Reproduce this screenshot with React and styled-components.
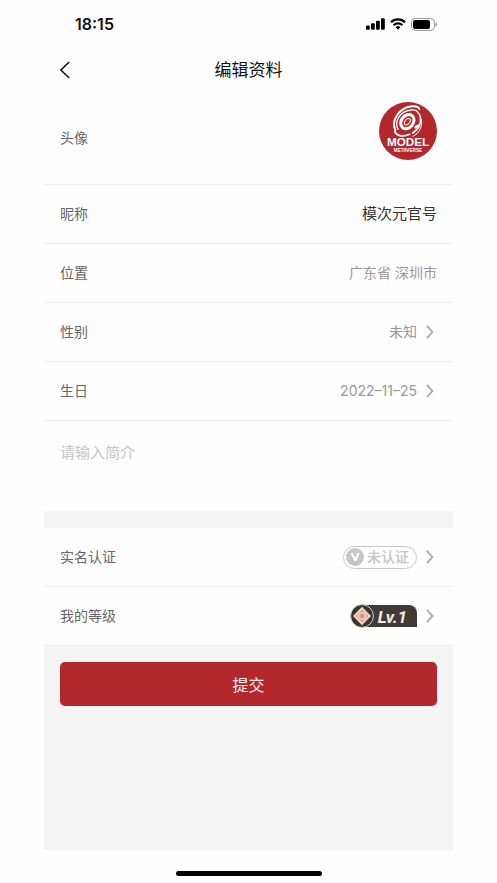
import React, { useState } from 'react';
import styled, { createGlobalStyle } from 'styled-components';

const GlobalStyle = createGlobalStyle`
  * {
    box-sizing: border-box;
  }
  body {
    margin: 0;
    background: #fefefe;
    font-family: Inter, "Noto Sans CJK SC", sans-serif;
  }
  button, input, select, textarea {
    font-family: inherit;
    margin: 0;
    padding: 0;
    border: none;
    background: transparent;
    appearance: none;
    &:focus {
      outline: none;
    }
  }
`;

const Screen = styled.div`
  min-height: 100vh;
  padding: 0 44px;
  display: flex;
  flex-direction: column;
`;

const StatusBar = styled.header`
  height: 48px;
  padding: 0 16px 0 31px;
  display: flex;
  align-items: center;
  justify-content: space-between;
`;

const Clock = styled.span`
  font-size: 16px;
  font-weight: 600;
  color: #111;
`;

const StatusIcons = styled.div`
  display: flex;
  align-items: center;
  gap: 5px;
`;

const NavBar = styled.nav`
  height: 44px;
  padding: 0 16px;
  display: grid;
  grid-template-columns: 1fr auto 1fr;
  align-items: center;
`;

const BackButton = styled.button`
  height: 18px;
  display: flex;
  justify-self: start;
  cursor: pointer;
`;

const Title = styled.h1`
  margin: 0;
  font-size: 17px;
  font-weight: 400;
  line-height: 24px;
  color: #111;
`;

const Form = styled.form`
  flex: 1;
  display: flex;
  flex-direction: column;
`;

const Row = styled.div`
  height: ${({ $tall }) => $tall ? 93 : 59}px;
  padding: 0 16px;
  display: flex;
  align-items: center;
  justify-content: space-between;
  border-bottom: 1px solid #efefef;
`;

const Label = styled.label`
  flex: none;
  font-size: 14px;
  line-height: 20px;
  color: #666;
`;

const Value = styled.div`
  display: flex;
  align-items: center;
  gap: 8px;
`;

const AvatarButton = styled.button`
  display: flex;
  padding-bottom: 14px;
  cursor: pointer;
`;

const TextInput = styled.input`
  flex: 1;
  min-width: 0;
  font-size: ${({ readOnly }) => readOnly ? 14 : 15}px;
  line-height: 20px;
  text-align: right;
  color: ${({ readOnly }) => readOnly ? '#999' : '#333'};
`;

const Select = styled.select`
  font-size: 14px;
  line-height: 20px;
  text-align-last: right;
  color: #999;
`;

const PickerButton = styled.button`
  display: flex;
  align-items: center;
  gap: 8px;
  font-size: 14px;
  line-height: 20px;
  color: #999;
  cursor: pointer;
`;

const Intro = styled.textarea`
  display: block;
  width: 100%;
  height: 90px;
  padding: 20px 16px;
  font-size: 15px;
  line-height: 24px;
  color: #333;
  resize: none;
  &::placeholder {
    color: #c5c5c9;
  }
`;

const Divider = styled.div`
  height: 17px;
  background: #f5f5f5;
`;

const VerifyTag = styled.span`
  height: 23px;
  padding: 0 7px 0 2px;
  display: flex;
  align-items: center;
  gap: 3px;
  border: 1px solid #c9c9c9;
  border-radius: 12px;
  font-weight: 500;
  color: #c4c4c4;
`;

const LevelTag = styled.span`
  height: 24px;
  display: flex;
  align-items: center;
`;

const LevelName = styled.span`
  height: 22px;
  margin-left: -12px;
  padding: 0 10px 0 16px;
  border-radius: 0 8px 0 0;
  background: #3f3b38;
  font-family: Roboto, sans-serif;
  font-size: 17px;
  font-style: italic;
  font-weight: 700;
  line-height: 24px;
  color: #f7ebe2;
`;

const Medal = styled.svg`
  position: relative;
`;

const Footer = styled.div`
  flex: 1;
  padding: 16px;
  background: #f5f5f5;
`;

const SubmitButton = styled.button`
  display: block;
  width: 100%;
  height: 44px;
  border-radius: 5px;
  background: #b3282d;
  font-size: 16px;
  color: #fbeeee;
  cursor: pointer;
`;

const HomeArea = styled.div`
  height: 33px;
  padding-bottom: 7px;
  display: flex;
  align-items: flex-end;
  justify-content: center;
`;

const HomeBar = styled.div`
  width: 146px;
  height: 5px;
  border-radius: 3px;
  background: #000;
`;

const Chevron = () => (
  <svg width="12" height="14" viewBox="0 0 12 14" fill="none" stroke="#aaa" strokeWidth="1.8">
    <path d="M2 0.8 L7.4 7 L2 13.2" />
  </svg>
);

const Signal = () => (
  <svg width="19" height="12" viewBox="0 0 19 12" fill="#000">
    <rect x="0" y="7.5" width="3.8" height="4.3" rx="1" />
    <rect x="5" y="5.2" width="3.8" height="6.6" rx="1" />
    <rect x="10" y="2.8" width="3.8" height="9" rx="1" />
    <rect x="15" y="0.2" width="3.8" height="11.6" rx="1" />
  </svg>
);

const Wifi = () => (
  <svg width="16" height="12" viewBox="0 0 16 12" fill="none" stroke="#000" strokeWidth="2.2">
    <path d="M0.9 4.3 A10.2 10.2 0 0 1 15.1 4.3" />
    <path d="M3.6 7.2 A6.3 6.3 0 0 1 12.4 7.2" />
    <path d="M5.7 9.2 A3.3 3.3 0 0 1 10.3 9.2 L8 11.7 Z" fill="#000" stroke="none" />
  </svg>
);

const Battery = () => (
  <svg width="26" height="13" viewBox="0 0 26 13">
    <rect x="0.5" y="0.5" width="23" height="12" rx="3.8" fill="none" stroke="#999" />
    <rect x="2" y="2" width="17" height="9" rx="2.2" fill="#000" />
    <path d="M24.5 4.5 Q26 5 26 6.5 Q26 8 24.5 8.5 Z" fill="#888" />
  </svg>
);

const Avatar = () => (
  <svg width="58" height="58" viewBox="0 0 174 174">
    <circle cx="87" cy="87" r="87" fill="#b3282d" />
    <g fill="none" stroke="#fff" strokeLinecap="round">
      <ellipse cx="85" cy="59" rx="18" ry="23" strokeWidth="9" transform="rotate(38 85 59)" />
      <ellipse cx="85" cy="59" rx="7" ry="11" strokeWidth="3" transform="rotate(38 85 59)" />
      <path d="M49 84 C36 56 60 16 100 13 C112 12 119 16 121 21" strokeWidth="6" />
      <path d="M57 82 C44 54 66 27 96 24 C109 23 116 28 118 34" strokeWidth="4" />
      <path d="M47 88 C55 105 76 104 92 97" strokeWidth="5" />
      <path d="M121 36 C130 58 122 80 101 93" strokeWidth="5" />
      <path d="M127 52 C131 74 121 94 102 103" strokeWidth="3" />
      <path d="M110 76 L118 71" strokeWidth="8" />
    </g>
    <g fill="#fff" fontFamily="Liberation Sans, sans-serif" fontWeight="700" textAnchor="middle">
      <text x="87" y="131" fontSize="35">MODEL</text>
      <text x="87" y="151" fontSize="14">METAVERSE</text>
    </g>
  </svg>
);

const VerifyMark = () => (
  <svg width="18" height="18" viewBox="0 0 18 18">
    <circle cx="9" cy="9" r="9" fill="#c6c6c6" />
    <path d="M4.6 5 H7 L9.2 10 L11.4 5 H13.8 L10.2 13 H8.2 Z" fill="#fff" />
  </svg>
);

const LevelMedal = () => (
  <Medal width="24" height="24" viewBox="0 0 24 24">
    <circle cx="12" cy="12" r="11.4" fill="#3a3532" stroke="#d8ccbc" strokeWidth="1" />
    <path d="M12 2.8 L21 12 L12 21.2 L3 12 Z" fill="#f4d8c8" />
    <path d="M12 5.4 L18.6 12 L12 18.6 L5.4 12 Z" fill="#dba78f" />
    <circle cx="12" cy="12" r="3.6" fill="#e0b09a" stroke="#f4dacb" strokeWidth="1" />
    <path d="M12 10.2 L13.8 12 L12 13.8 L10.2 12 Z" fill="#c28a75" />
  </Medal>
);

const App = () => {
  const [nickname, setNickname] = useState('模次元官号');
  const [gender, setGender] = useState('未知');
  const [intro, setIntro] = useState('');

  return (
    <Screen>
      <GlobalStyle />
      <StatusBar>
        <Clock>18:15</Clock>
        <StatusIcons>
          <Signal />
          <Wifi />
          <Battery />
        </StatusIcons>
      </StatusBar>
      <NavBar>
        <BackButton type="button" aria-label="返回">
          <svg width="11" height="18" viewBox="0 0 11 18" fill="none" stroke="#111" strokeWidth="1.5">
            <path d="M9.2 1 L0.9 9 L9.2 17" />
          </svg>
        </BackButton>
        <Title>编辑资料</Title>
      </NavBar>
      <Form onSubmit={event => event.preventDefault()}>
        <Row $tall>
          <Label htmlFor="avatar">头像</Label>
          <AvatarButton id="avatar" type="button">
            <Avatar />
          </AvatarButton>
        </Row>
        <Row>
          <Label htmlFor="nickname">昵称</Label>
          <TextInput
            id="nickname"
            value={nickname}
            onChange={event => setNickname(event.target.value)}
          />
        </Row>
        <Row>
          <Label htmlFor="location">位置</Label>
          <TextInput id="location" value="广东省 深圳市" readOnly />
        </Row>
        <Row>
          <Label htmlFor="gender">性别</Label>
          <Value>
            <Select
              id="gender"
              value={gender}
              onChange={event => setGender(event.target.value)}
            >
              <option>未知</option>
              <option>男</option>
              <option>女</option>
            </Select>
            <Chevron />
          </Value>
        </Row>
        <Row>
          <Label htmlFor="birthday">生日</Label>
          <PickerButton id="birthday" type="button">
            2022–11–25
            <Chevron />
          </PickerButton>
        </Row>
        <Intro
          aria-label="简介"
          placeholder="请输入简介"
          value={intro}
          onChange={event => setIntro(event.target.value)}
        />
        <Divider />
        <Row>
          <Label htmlFor="verify">实名认证</Label>
          <PickerButton id="verify" type="button">
            <VerifyTag>
              <VerifyMark />
              未认证
            </VerifyTag>
            <Chevron />
          </PickerButton>
        </Row>
        <Row>
          <Label htmlFor="level">我的等级</Label>
          <PickerButton id="level" type="button">
            <LevelTag>
              <LevelMedal />
              <LevelName>Lv.1</LevelName>
            </LevelTag>
            <Chevron />
          </PickerButton>
        </Row>
        <Footer>
          <SubmitButton type="submit">提交</SubmitButton>
        </Footer>
      </Form>
      <HomeArea>
        <HomeBar />
      </HomeArea>
    </Screen>
  );
};

export default App;
